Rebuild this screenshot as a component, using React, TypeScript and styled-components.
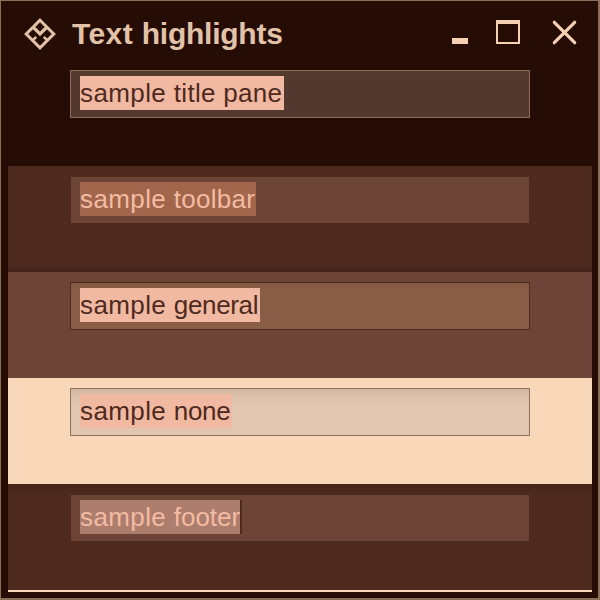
import React from "react";
import styled, { createGlobalStyle } from "styled-components";

const GlobalStyle = createGlobalStyle`
  html, body { margin: 0; padding: 0; overflow: hidden; }
  * { box-sizing: border-box; }
`;

const Window = styled.main`
  width: 600px;
  height: 600px;
  display: flex;
  flex-direction: column;
  background: #250d06;
  border: solid #8a6e55;
  border-width: 1px 2px 2px 1px;
  padding: 0 6px 6px 7px;
  font-family: "Liberation Sans", Arial, sans-serif;
`;

const TitleBar = styled.header`
  flex: 0 0 59px;
  display: flex;
  align-items: flex-start;
  padding-left: 15px;
`;

const Logo = styled.svg`
  width: 34px;
  height: 34px;
  margin-top: 16px;
`;

const Title = styled.h1`
  flex: 1;
  margin: 15px 0 0 15px;
  font-size: 30px;
  line-height: 36px;
  font-weight: 700;
  white-space: pre;
  color: #e2c3a9;
`;

const Controls = styled.svg`
  width: 128px;
  height: 32px;
  margin: 15px 14px 0 0;
`;

const Band = styled.section<{ $bg: string; $shade?: string }>`
  flex: 0 0 106px;
  padding: 10px 62px 0;
  background: ${(p) => (p.$shade ? `${p.$shade}, ` : "")}${(p) => p.$bg};
`;

const Field = styled.div<{ $bg: string; $border: string }>`
  height: 48px;
  padding: 5px 9px;
  display: flex;
  border: 1px solid ${(p) => p.$border};
  background: linear-gradient(rgba(96, 72, 30, 0.11), rgba(96, 72, 30, 0) 14px) padding-box,
    ${(p) => p.$bg} padding-box;
`;

const Selection = styled.span<{ $bg: string; $color: string; $width: number }>`
  width: ${(p) => p.$width}px;
  height: 34px;
  font-size: 26px;
  line-height: 35px;
  white-space: pre;
  background: ${(p) => p.$bg};
  color: ${(p) => p.$color};
`;

const Word = styled.span<{ $spacing: number }>`
  letter-spacing: ${(p) => p.$spacing}px;
`;

const Caret = styled.span`
  width: 2px;
  height: 34px;
  background: #4e2a1e;
`;

const BottomLine = styled.div`
  height: 2px;
  background: #f9d8ba;
`;

type Row = {
  bg: string;
  shade?: string;
  field: string;
  border: string;
  selection: string;
  color: string;
  width: number;
  words: [string, number][];
  caret?: boolean;
};

const rows: Row[] = [
  {
    bg: "#250d06", field: "#53382f", border: "#8a6e55", selection: "#f1b9a1", color: "#4e2a1e",
    width: 204, words: [["sample ", 0.4], ["title ", 0.27], ["pane", 0.3]],
  },
  {
    bg: "#4e2a1e", shade: "linear-gradient(transparent 98px, #41231a 106px)",
    field: "#6d4437", border: "transparent", selection: "#a1664b", color: "#f3bca3",
    width: 176, words: [["sample ", 0.4], ["toolbar", 0.25]],
  },
  {
    bg: "#6d4437", field: "#8a5d47", border: "#4e2a1e", selection: "#f1b9a1", color: "#4e2a1e",
    width: 180, words: [["sample ", 0.4], ["general", -0.35]],
  },
  {
    bg: "#f9d8ba", field: "#e2c6b0", border: "#8f7160", selection: "#f1b9a1", color: "#4e2a1e",
    width: 152, words: [["sample ", 0.4], ["none", -0.35]],
  },
  {
    bg: "#4e2a1e", shade: "linear-gradient(#46251a, transparent 10px)",
    field: "#6d4437", border: "transparent", selection: "#ad7d6d", color: "#f3bca3",
    width: 160, words: [["sample ", 0.4], ["footer", -0.05]], caret: true,
  },
];

export default function App() {
  return (
    <Window>
      <GlobalStyle />
      <TitleBar>
        <Logo viewBox="23 17 34 34" fill="none" stroke="#e2c3a9">
          <path d="M40 20.2 L53.8 34 L40 47.8 L26.2 34 Z" strokeWidth="3" />
          <path d="M33 27 L40 34 L47 27" strokeWidth="3.2" />
          <path d="M32.6 40.4 L36.2 36.8 M47.4 40.4 L43.8 36.8" strokeWidth="2.6" />
        </Logo>
        <Title>
          <Word $spacing={0.4}>{"Text "}</Word>
          <Word $spacing={-0.25}>highlights</Word>
        </Title>
        <Controls viewBox="450 16 128 32" fill="#f5d0b3">
          <path d="M452 38h16v6h-16z" />
          <path fillRule="evenodd" d="M496 20h24v24h-24z M498 24v18h20V24z" />
          <path d="M554.3 22.3 L574.7 42.7 M574.7 22.3 L554.3 42.7" stroke="#f5d0b3" strokeWidth="3.2" strokeLinecap="round" />
        </Controls>
      </TitleBar>
      {rows.map((row, i) => (
        <Band key={i} $bg={row.bg} $shade={row.shade}>
          <Field $bg={row.field} $border={row.border}>
            <Selection $bg={row.selection} $color={row.color} $width={row.width}>
              {row.words.map(([text, spacing]) => (
                <Word key={text} $spacing={spacing}>{text}</Word>
              ))}
            </Selection>
            {row.caret && <Caret />}
          </Field>
        </Band>
      ))}
      <BottomLine />
    </Window>
  );
}
